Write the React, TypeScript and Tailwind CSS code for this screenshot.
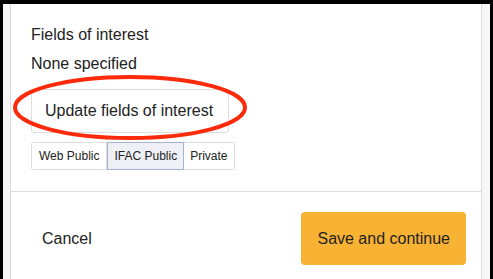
export default function App() {
  return (
    <div className="w-[493px] h-[279px] bg-black pt-[4px] pl-[3px] pr-[3px] overflow-hidden font-['Liberation_Sans',Arial,sans-serif] text-[#222]">
      <div className="flex h-[275px]">
        <div className="w-[7px] bg-[#f7f7f7]" />
        <div className="relative w-[472px] bg-white border-x border-[#dcdcdc]">
          {/* Top section */}
          <div className="pl-[20px] pt-[19px] pb-[21px] border-b border-[#dcdcdc]">
            <div className="text-[16px] leading-[24px] mb-[5px]">Fields of interest</div>
            <div className="text-[16px] leading-[24px] mb-[13px]">None specified</div>
            <button className="h-[44px] px-[13px] pr-[15px] text-[16px] border border-[#dedede] rounded-[3px] bg-white mb-[9px]">
              Update fields of interest
            </button>
            <div className="flex h-[28px] text-[12px]">
              <button className="px-[7px] border border-[#dedede] rounded-l-[2px] bg-white">Web Public</button>
              <button className="px-[6px] border border-[#a8b2cf] bg-[#eef0f6]">IFAC Public</button>
              <button className="px-[6px] border border-l-0 border-[#dedede] rounded-r-[2px] bg-white">Private</button>
            </div>
          </div>
          {/* Footer */}
          <div className="flex items-center justify-between pl-[31px] pr-[15px] pt-[20px]">
            <button className="text-[16px]">Cancel</button>
            <button className="h-[53px] px-[16px] text-[16px] bg-[#f8b234] rounded-[4px]">Save and continue</button>
          </div>
          {/* Red annotation ellipse */}
          <svg className="absolute left-0 top-0 pointer-events-none" width="472" height="271">
            <ellipse cx="119" cy="103.5" rx="115" ry="30.5" fill="none" stroke="#fb2a0a" strokeWidth="4" />
          </svg>
        </div>
        <div className="w-[8px] bg-[#f7f7f7]" />
      </div>
    </div>
  );
}
